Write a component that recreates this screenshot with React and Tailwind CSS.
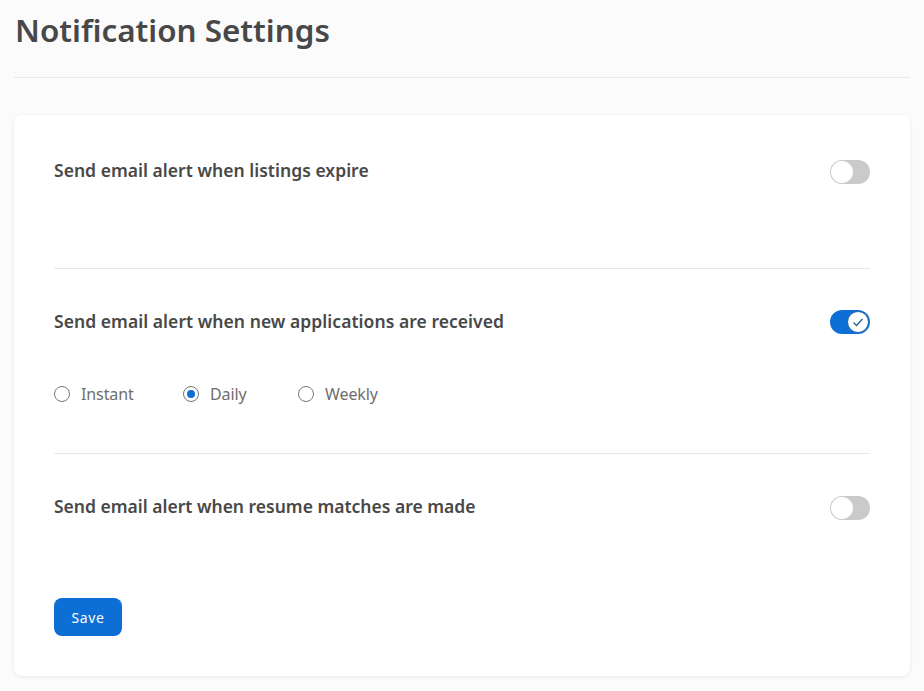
import { useState } from 'react';

const FONT = { fontFamily: '"Noto Sans", sans-serif' };

function Toggle({ on }) {
  if (on) {
    return (
      <div className="flex h-6 w-10 items-center justify-end rounded-full bg-[#0d6fd6] pr-px">
        <div className="flex h-[22px] w-[22px] items-center justify-center rounded-full border border-[#1f66ad] bg-white">
          <svg width="12" height="12" viewBox="0 0 12 12" fill="none" stroke="#2a5f94" strokeWidth="1.3">
            <path d="M1.5 6.5 L4.5 9.5 L10.5 3" />
          </svg>
        </div>
      </div>
    );
  }
  return (
    <div className="flex h-6 w-10 items-center rounded-full bg-[#c9cacc] pl-px">
      <div className="h-[22px] w-[22px] rounded-full bg-white" />
    </div>
  );
}

function Radio({ label, checked, className }) {
  return (
    <div className={`flex items-center gap-[11px] ${className}`}>
      <div className={`flex h-4 w-4 items-center justify-center rounded-full border ${checked ? 'border-[#6f7378]' : 'border-[#75787c]'} bg-white`}>
        {checked && <div className="h-2 w-2 rounded-full bg-[#0d6fd6]" />}
      </div>
      <span className="text-[16px] leading-6 tracking-[-0.1px] text-[#6e6e6e]">{label}</span>
    </div>
  );
}

export default function App() {
  const [freq] = useState('daily');

  return (
    <div className="h-[691px] w-[924px] overflow-hidden bg-[#fbfbfb] pl-[14px] pr-[14px]" style={FONT}>
      <div className="flex h-[78px] flex-col border-b border-[#e8e8e8] pl-px">
        <h1 className="h-[60px] text-[31.4px] leading-[60px] font-semibold text-[#484848]">Notification Settings</h1>
      </div>

      <div className="mt-[37px] h-[561px] rounded-lg bg-white px-10 shadow-[0_1px_4px_rgba(0,0,0,0.08)]">
        <div className="flex h-[154px] items-start justify-between border-b border-[#e6e6e6] pt-[43px]">
          <span className="text-[17.5px] leading-6 tracking-[0.03px] font-semibold text-[#484848]">Send email alert when listings expire</span>
          <div className="mt-0.5"><Toggle /></div>
        </div>

        <div className="h-[185px] border-b border-[#e6e6e6] pt-10">
          <div className="flex items-start justify-between">
            <span className="text-[17.5px] leading-6 tracking-[0.05px] font-semibold text-[#484848]">Send email alert when new applications are received</span>
            <div className="mt-px"><Toggle on /></div>
          </div>
          <div className="mt-12 flex items-center">
            <Radio label="Instant" className="w-[129px]" />
            <Radio label="Daily" checked={freq === 'daily'} className="w-[115px]" />
            <Radio label="Weekly" />
          </div>
        </div>

        <div className="flex items-start justify-between pt-10">
          <span className="text-[17.5px] leading-6 font-semibold text-[#484848]">Send email alert when resume matches are made</span>
          <div className="mt-0.5"><Toggle /></div>
        </div>

        <button className="mt-[78px] h-[38px] w-[68px] rounded-lg bg-[#0d6fd6] text-[14px] tracking-[0.6px] text-white">Save</button>
      </div>
    </div>
  );
}
